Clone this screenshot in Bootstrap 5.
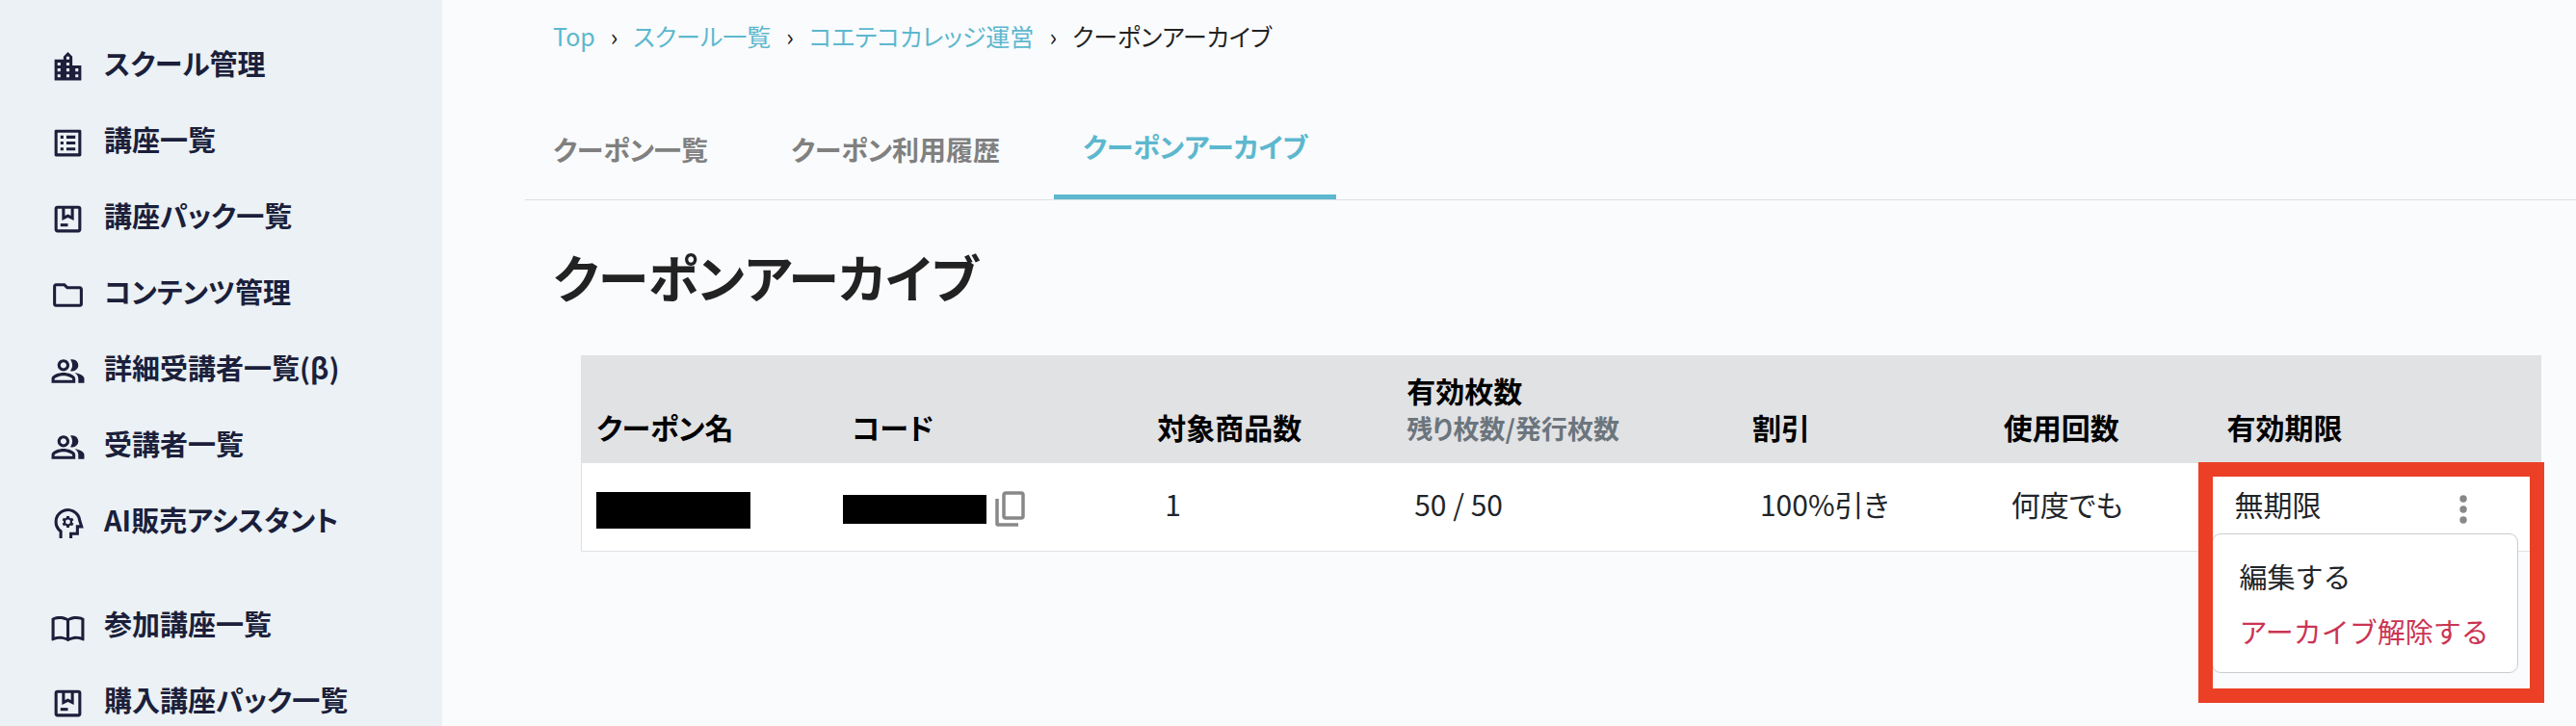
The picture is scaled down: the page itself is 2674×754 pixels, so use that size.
<!DOCTYPE html>
<html lang="ja">
<head>
<meta charset="utf-8">
<meta name="viewport" content="width=device-width, initial-scale=1">
<title>クーポンアーカイブ</title>
<link href="https://cdn.jsdelivr.net/npm/bootstrap@5.3.0/dist/css/bootstrap.min.css" rel="stylesheet">
<style>
  body { background: #fafbfd; color: #212529; font-family: "Noto Sans CJK JP", sans-serif; font-feature-settings: "palt"; font-size: 30px; line-height: 44px; }
  a { text-decoration: none; }
  .side { width: 459px; background: #ebf1f4; padding-top: 25px; }
  .side .nav-link { height: 79px; padding: 18px 0 0 52px; gap: 19px; color: #1b1f3b; font-size: 29px; font-weight: 700; white-space: nowrap; }
  .side svg { width: 37px; height: 37px; margin-top: 8px; flex: none; fill: currentColor; }
  .side .group-start { margin-top: 29px; }
  .page { padding-left: 86px; }
  .crumbs { padding: 19px 0 0 29px; font-size: 25px; line-height: 36px; --bs-breadcrumb-divider: "›"; --bs-breadcrumb-divider-color: #222; --bs-breadcrumb-item-padding-x: 16px; }
  .crumbs a { color: #5cb8ce; }
  .crumbs .active { color: #222; }
  .tabs { margin-top: 66px; gap: 26px; border-bottom: 1px solid #dddfe2; }
  .tabs .nav-link { padding: 14px 30px 32px; color: #808080; font-size: 28px; font-weight: 700; line-height: 40px; }
  .tabs .nav-link:first-child { padding-left: 29px; }
  .tabs .nav-link.active { padding-top: 11px; padding-bottom: 30px; border-bottom: 5px solid #5cb8ce; color: #5cb8ce; }
  h1 { margin: 49px 0 0 29px; font-size: 53px; line-height: 60px; font-weight: 700; color: #222; }
  .list-wrap { margin: 52px 36px 0 58px; }
  .coupons { table-layout: fixed; margin: 0; border: 1px solid #dee2e6; border-top: 0; color: #212529; }
  .coupons th { height: 112px; padding: 12px 0 18px 15px; background: #e1e2e4; border: 0; color: #000; vertical-align: bottom; line-height: 40px; white-space: nowrap; }
  .coupons th small { font-size: 27px; color: #6c757d; line-height: 36px; margin-top: 2px; }
  .coupons td { height: 91px; padding: 0 0 7px 23px; background: #fff; border: 0; vertical-align: middle; white-space: nowrap; }
  .coupons td.flush { padding-left: 15px; }
  .coupons td.code { padding-left: 6px; }
  .masked { background: #000; }
  .name-mask { width: 160px; height: 38px; margin-top: 14px; }
  .code-mask { width: 149px; height: 30px; }
  .code-line { margin-top: 12px; }
  .icon-btn { padding: 0; border: 0; background: none; line-height: 0; color: #888; }
  .kebab { margin-right: 66px; margin-top: 12px; }
  .row-menu { display: block; left: -1px; right: 23px; top: 73px; min-width: 0; height: 145px; padding: 15px 0; border: 1px solid #ccc; border-radius: 9px; background: #fff; font-size: 29px; }
  .row-menu .dropdown-item { padding: 6px 0 6px 28px; line-height: 45px; color: #212529; }
  .row-menu .dropdown-item.undo { color: #cb3453; }
  .callout-frame { left: -15px; right: -4px; top: -1px; height: 250px; border: 15px solid #eb4026; z-index: 1100; pointer-events: none; }
</style>
</head>
<body>
<svg class="d-none" aria-hidden="true">
  <symbol id="i-city" viewBox="0 0 24 24"><path d="M15 11V5l-3-3-3 3v2H3v14h18V11h-6zm-8 8H5v-2h2v2zm0-4H5v-2h2v2zm0-4H5V9h2v2zm6 8h-2v-2h2v2zm0-4h-2v-2h2v2zm0-4h-2V9h2v2zm0-4h-2V5h2v2zm6 12h-2v-2h2v2zm0-4h-2v-2h2v2z"/></symbol>
  <symbol id="i-list" viewBox="0 0 24 24"><path d="M11 7h6v2h-6zm0 4h6v2h-6zm0 4h6v2h-6zM7 7h2v2H7zm0 4h2v2H7zm0 4h2v2H7zM20.1 3H3.9c-.5 0-.9.4-.9.9v16.2c0 .4.4.9.9.9h16.2c.4 0 .9-.5.9-.9V3.9c0-.5-.5-.9-.9-.9zM19 19H5V5h14v14z"/></symbol>
  <symbol id="i-pack" viewBox="0 0 24 24"><path fill-rule="evenodd" d="M5 3h14a2 2 0 0 1 2 2v14a2 2 0 0 1-2 2H5a2 2 0 0 1-2-2V5a2 2 0 0 1 2-2zM5 5v14h14V5h-3v8l-4-2-4 2V5zM10 5v4.800l2-1 2 1V5z"/><path d="M7 15h5v2H7z"/></symbol>
  <symbol id="i-folder" viewBox="0 0 24 24"><path d="M9.170 6l2 2H20v10H4V6h5.170M10 4H4c-1.100 0-1.990.9-1.990 2L2 18c0 1.100.9 2 2 2h16c1.100 0 2-.9 2-2V8c0-1.100-.9-2-2-2h-8l-2-2z"/></symbol>
  <symbol id="i-people" viewBox="0 0 24 24"><path d="M16.670 13.130C18.040 14.060 19 15.320 19 17v3h4v-3c0-2.180-3.570-3.470-6.330-3.870zM15 12c2.210 0 4-1.790 4-4s-1.790-4-4-4c-.47 0-.91.1-1.330.24a5.980 5.980 0 0 1 0 7.520c.42.14.86.24 1.330.24zM9 12c2.210 0 4-1.790 4-4s-1.790-4-4-4-4 1.790-4 4 1.790 4 4 4zm0-6c1.100 0 2 .9 2 2s-.9 2-2 2-2-.9-2-2 .9-2 2-2zM9 13c-2.670 0-8 1.340-8 4v3h16v-3c0-2.660-5.330-4-8-4zm6 5H3v-.99C3.200 16.290 6.300 15 9 15s5.800 1.290 6 2v1z"/></symbol>
  <symbol id="i-ai" viewBox="0 0 24 24"><g fill="none" stroke="currentColor"><path stroke-width="2" d="M7.200 22v-4.600A8 8 0 1 1 19.900 10l1.300 4.200H18.400V19H14v3"/><circle cx="12" cy="11" r="2.300" stroke-width="1.400"/><path stroke-width="1.900" d="M12 8.400V7.100M12 13.600v1.300M14.250 12.300l1.130.65M14.250 9.700l1.130-.65M9.750 12.300l-1.130.65M9.750 9.700l-1.130-.65"/></g></symbol>
  <symbol id="i-book" viewBox="0 0 24 24"><path d="M21 5c-1.110-.35-2.330-.5-3.500-.5-1.950 0-4.050.4-5.500 1.500-1.450-1.100-3.550-1.500-5.500-1.500S2.450 4.900 1 6v14.650c0 .25.25.5.5.5.1 0 .15-.05.25-.05C3.100 20.450 5.050 20 6.500 20c1.950 0 4.050.4 5.500 1.500 1.350-.85 3.800-1.500 5.500-1.500 1.650 0 3.350.3 4.750 1.050.1.050.15.050.25.050.25 0 .5-.25.5-.5V6c-.6-.45-1.250-.75-2-1zM3 18.500V7c1.100-.35 2.300-.5 3.500-.5 1.340 0 3.130.41 4.500.99v11.500C9.630 18.410 7.840 18 6.500 18c-1.200 0-2.400.15-3.500.5zm18 0c-1.100-.35-2.300-.5-3.500-.5-1.340 0-3.130.41-4.500.99V7.490c1.370-.59 3.160-.99 4.500-.99 1.200 0 2.400.15 3.500.5v11.500z"/></symbol>
</svg>

<div class="d-flex vh-100 overflow-hidden">
  <aside class="side flex-shrink-0 overflow-hidden">
    <nav class="nav flex-column flex-nowrap">
      <a class="nav-link d-flex" href="#"><svg><use href="#i-city"/></svg>スクール管理</a>
      <a class="nav-link d-flex" href="#"><svg><use href="#i-list"/></svg>講座一覧</a>
      <a class="nav-link d-flex" href="#"><svg><use href="#i-pack"/></svg>講座パック一覧</a>
      <a class="nav-link d-flex" href="#"><svg><use href="#i-folder"/></svg>コンテンツ管理</a>
      <a class="nav-link d-flex" href="#"><svg><use href="#i-people"/></svg>詳細受講者一覧(β)</a>
      <a class="nav-link d-flex" href="#"><svg><use href="#i-people"/></svg>受講者一覧</a>
      <a class="nav-link d-flex" href="#"><svg><use href="#i-ai"/></svg>AI販売アシスタント</a>
      <a class="nav-link d-flex group-start" href="#"><svg><use href="#i-book"/></svg>参加講座一覧</a>
      <a class="nav-link d-flex" href="#"><svg><use href="#i-pack"/></svg>購入講座パック一覧</a>
    </nav>
  </aside>

  <main class="page flex-grow-1">
    <nav aria-label="パンくずリスト">
      <ol class="breadcrumb crumbs mb-0">
        <li class="breadcrumb-item"><a href="#">Top</a></li>
        <li class="breadcrumb-item"><a href="#">スクール一覧</a></li>
        <li class="breadcrumb-item"><a href="#">コエテコカレッジ運営</a></li>
        <li class="breadcrumb-item active" aria-current="page">クーポンアーカイブ</li>
      </ol>
    </nav>

    <nav class="nav tabs">
      <a class="nav-link" href="#">クーポン一覧</a>
      <a class="nav-link" href="#">クーポン利用履歴</a>
      <a class="nav-link active" aria-current="page" href="#">クーポンアーカイブ</a>
    </nav>

    <h1>クーポンアーカイブ</h1>

    <div class="list-wrap">
      <table class="table coupons">
        <colgroup>
          <col style="width:13.07%"><col style="width:15.58%"><col style="width:12.73%"><col style="width:17.64%"><col style="width:12.82%"><col style="width:11.4%"><col style="width:16.76%">
        </colgroup>
        <thead>
          <tr>
            <th scope="col">クーポン名</th>
            <th scope="col">コード</th>
            <th scope="col">対象商品数</th>
            <th scope="col">有効枚数<small class="d-block">残り枚数/発行枚数</small></th>
            <th scope="col">割引</th>
            <th scope="col">使用回数</th>
            <th scope="col">有効期限</th>
          </tr>
        </thead>
        <tbody>
          <tr>
            <td class="flush"><div class="masked name-mask"></div></td>
            <td class="code">
              <div class="code-line d-flex align-items-center">
                <div class="masked code-mask"></div>
                <button class="icon-btn ms-2" type="button" aria-label="コードをコピー">
                  <svg width="32" height="38" viewBox="0 0 32 38" fill="none" stroke="currentColor" stroke-width="3.500"><rect x="10" y="2" width="20" height="26" rx="2"/><path d="M3 8v26a1 1 0 0 0 1 1h21"/></svg>
                </button>
              </div>
            </td>
            <td>1</td>
            <td>50 / 50</td>
            <td>100%引き</td>
            <td>何度でも</td>
            <td class="position-relative">
              <div class="d-flex align-items-center justify-content-between">
                <span>無期限</span>
                <button class="icon-btn kebab" type="button" aria-label="操作メニュー" aria-expanded="true">
                  <svg width="28" height="32" viewBox="0 0 28 32" fill="currentColor"><circle cx="14" cy="5" r="3.700"/><circle cx="14" cy="16" r="3.700"/><circle cx="14" cy="27" r="3.700"/></svg>
                </button>
              </div>
              <div class="dropdown-menu row-menu">
                <button class="dropdown-item" type="button">編集する</button>
                <button class="dropdown-item undo" type="button">アーカイブ解除する</button>
              </div>
              <div class="callout-frame position-absolute"></div>
            </td>
          </tr>
        </tbody>
      </table>
    </div>
  </main>
</div>
<script src="https://cdn.jsdelivr.net/npm/bootstrap@5.3.0/dist/js/bootstrap.bundle.min.js"></script>
</body>
</html>
